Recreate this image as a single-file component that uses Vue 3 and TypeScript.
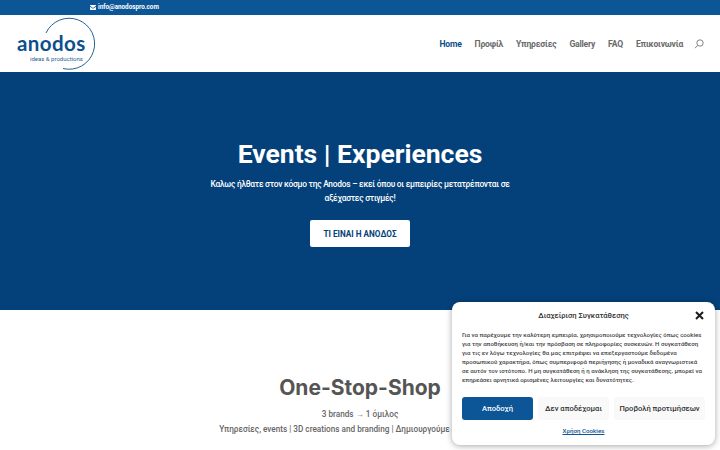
<script setup lang="ts">
const navItems: { label: string; active?: boolean }[] = [
  { label: 'Home', active: true },
  { label: 'Προφίλ' },
  { label: 'Υπηρεσίες' },
  { label: 'Gallery' },
  { label: 'FAQ' },
  { label: 'Επικοινωνία' },
]
</script>

<template>
  <div class="page">
    <div class="topbar">
      <svg class="mail" width="6" height="5" viewBox="0 0 14 12"><path d="M0 2 7 7l7-5V0H0zM0 4v8h14V4L7 9z" fill="#fff"/></svg>
      <span class="mailtext">info@anodospro.com</span>
    </div>
    <header class="header">
      <div class="logo">
        <svg class="ring" width="84" height="57" viewBox="0 0 84 57">
          <path d="M29 18 A25.5 25.5 0 1 1 46 53.5" fill="none" stroke="#0b4f8a" stroke-width="0.9"/>
        </svg>
        <span class="logoname">anodos</span>
        <span class="logosub">ideas &amp; productions</span>
      </div>
      <nav class="nav">
        <a v-for="item in navItems" :key="item.label" :class="['navlink', { active: item.active }]">{{ item.label }}</a>
        <svg class="search" width="10" height="10" viewBox="0 0 10 10"><circle cx="6" cy="4" r="3.2" fill="none" stroke="#777" stroke-width="0.9"/><path d="M3.7 6.3 1 9.2" stroke="#777" stroke-width="0.9" fill="none"/></svg>
      </nav>
    </header>
    <section class="hero">
      <h1>Events | Experiences</h1>
      <p>Καλως ήλθατε στον κόσμο της Anodos – εκεί όπου οι εμπειρίες μετατρέπονται σε αξέχαστες στιγμές!</p>
      <a class="herobtn">ΤΙ ΕΙΝΑΙ Η ΑΝΟΔΟΣ</a>
    </section>
    <section class="intro">
      <h2>One-Stop-Shop</h2>
      <p class="l1">3 brands → 1 όμιλος</p>
      <p class="l2">Υπηρεσίες, events | 3D creations and branding | Δημιουργούμε εμπειρίες σε</p>
    </section>
    <aside class="modal">
      <div class="mhead">
        <span class="mtitle">Διαχείριση Συγκατάθεσης</span>
        <svg class="close" width="9" height="9" viewBox="0 0 9 9"><path d="M1 1 8 8M8 1 1 8" stroke="#1c1c1c" stroke-width="2"/></svg>
      </div>
      <p class="mtext">Για να παρέχουμε την καλύτερη εμπειρία, χρησιμοποιούμε τεχνολογίες όπως cookies για την αποθήκευση ή/και την πρόσβαση σε πληροφορίες συσκευών. Η συγκατάθεση για τις εν λόγω τεχνολογίες θα μας επιτρέψει να επεξεργαστούμε δεδομένα προσωπικού χαρακτήρα, όπως συμπεριφορά περιήγησης ή μοναδικά αναγνωριστικά σε αυτόν τον ιστότοπο. Η μη συγκατάθεση ή η ανάκληση της συγκατάθεσης, μπορεί να επηρεάσει αρνητικά ορισμένες λειτουργίες και δυνατότητες.</p>
      <div class="mbtns">
        <button class="b accept">Αποδοχή</button>
        <button class="b deny">Δεν αποδέχομαι</button>
        <button class="b prefs">Προβολή προτιμήσεων</button>
      </div>
      <a class="mlink">Χρήση Cookies</a>
    </aside>
  </div>
</template>

<style>
html, body { margin: 0; background: #fff; overflow: hidden; }
</style>

<style scoped>
.page { position: relative; width: 720px; height: 450px; overflow: hidden; font-family: Roboto, "Noto Sans", sans-serif; background: #fff; }
.topbar { height: 15px; background: #0c5596; display: flex; align-items: center; padding-left: 90px; color: #fff; }
.mail { margin-right: 2px; }
.mailtext { font-size: 6.3px; font-weight: 700; line-height: 15px; }
.header { height: 57px; display: flex; justify-content: space-between; align-items: center; padding-right: 16px; padding-left: 17px; background: #fff; }
.logo { position: relative; width: 80px; height: 57px; }
.ring { position: absolute; left: 0; top: 0; }
.logoname { position: absolute; left: 0; top: 20px; font: 700 20.5px/16px "Lato", sans-serif; color: #0c4f8c; letter-spacing: 0.4px; }
.logosub { position: absolute; left: 13px; top: 39.5px; font-size: 6px; line-height: 7px; color: #2a6298; white-space: nowrap; }
.nav { display: flex; align-items: center; gap: 12.9px; padding-top: 1px; }
.navlink { font-size: 8.6px; font-weight: 700; color: #6b6b6b; letter-spacing: -0.2px; }
.navlink.active { color: #0c4f8c; }
.search { margin-left: -2px; }
.hero { height: 238px; background: #04417a; color: #fff; display: flex; flex-direction: column; align-items: center; box-sizing: border-box; padding-top: 65px; }
.hero h1 { margin: 0; font-size: 26.5px; line-height: 34px; font-weight: 700; }
.hero p { margin: 6px 0 0; width: 310px; text-align: center; font-size: 8.4px; letter-spacing: -0.25px; line-height: 14px; font-weight: 500; }
.herobtn { margin-top: 15px; width: 100px; height: 27px; border-radius: 2px; background: #fff; color: #04417a; font-size: 8.2px; font-weight: 700; display: flex; align-items: center; justify-content: center; }
.intro { text-align: center; padding-top: 63px; }
.intro h2 { margin: 0; font: 700 21px/30px "Inter", sans-serif; color: #555; }
.intro p { margin: 0; font-size: 8.2px; font-weight: 500; color: #666; white-space: nowrap; }
.l1 { margin-top: 4px !important; line-height: 14px; }
.l2 { line-height: 16px; }
.modal { position: absolute; left: 452px; top: 302px; width: 263px; height: 143px; box-sizing: border-box; padding: 0 10px; background: #fff; border-radius: 8px; box-shadow: 0 1px 6px rgba(0,0,0,.35); display: flex; flex-direction: column; }
.mhead { position: relative; height: 21px; display: flex; align-items: flex-end; justify-content: center; }
.mtitle { font-size: 7.6px; font-weight: 500; color: #333; line-height: 14px; }
.close { position: absolute; right: 1px; top: 9px; }
.mtext { margin: 7px 0 0; font-size: 6.1px; line-height: 9px; font-weight: 500; color: #444; }
.mbtns { display: flex; gap: 5px; margin-top: 13px; }
.b { border: 0; height: 23px; padding: 0; border-radius: 3px; font-family: inherit; font-size: 7.6px; font-weight: 500; background: #f9f9f9; color: #333; }
.accept { width: 71px; background: #0c5596; color: #fff; }
.deny { width: 71px; }
.prefs { width: 91px; }
.mlink { margin-top: 7px; text-align: center; font-size: 6.2px; font-weight: 500; color: #0c5596; text-decoration: underline; }
</style>
